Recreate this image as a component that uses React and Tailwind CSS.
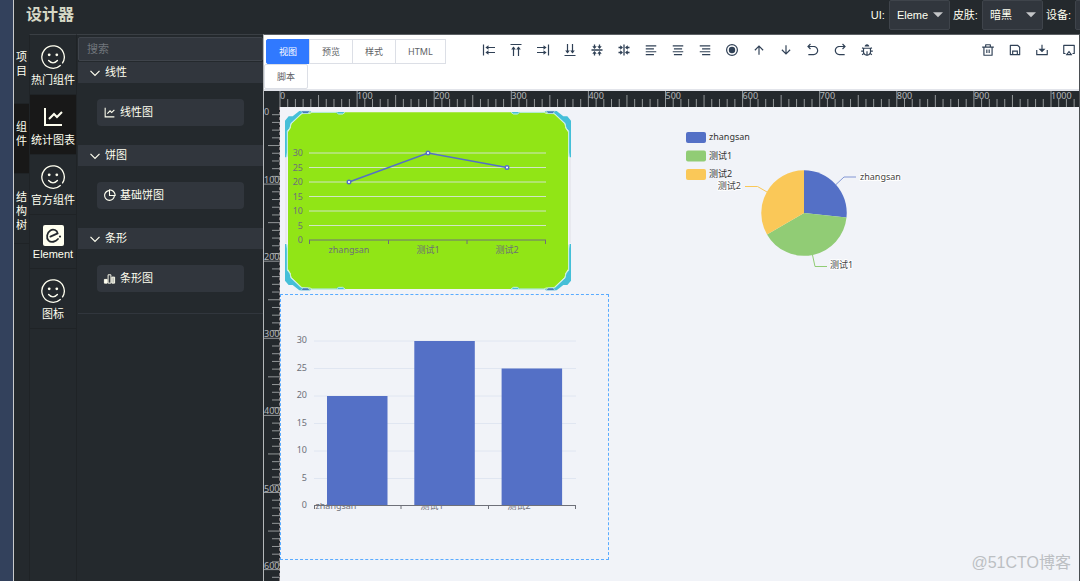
import { useEffect, useRef, useState } from 'react';
import {
  RiLineChartLine, RiPieChart2Line, RiAlignLeft, RiAlignCenter, RiAlignRight,
  RiArrowUpLine, RiArrowDownLine, RiArrowGoBackLine, RiArrowGoForwardLine,
  RiBugLine, RiDeleteBinLine, RiSaveLine, RiDownload2Line, RiAirplayLine, RiArrowDownSFill,
} from 'react-icons/ri';

const RULER_STEP = 7.71;

const Smiley = ({ className }) => (
  <svg viewBox="0 0 24 24" fill="none" stroke="currentColor" className={className}>
    <path d="M20.6 19.3A11.2 11.2 0 1 0 18.8 21" strokeWidth="1.3" transform="rotate(-6 12 12)" />
    <circle cx="8.2" cy="9.8" r="1.4" fill="currentColor" stroke="none" />
    <circle cx="15.8" cy="9.8" r="1.4" fill="currentColor" stroke="none" />
    <path d="M7.6 15.6Q12 20.2 16.4 15.6" strokeWidth="1.4" strokeLinecap="round" />
  </svg>
);

const ElementLogo = ({ className }) => (
  <svg viewBox="0 0 21 21" className={className}>
    <rect width="21" height="21" rx="2" fill="#fffff0" />
    <path d="M7.4 11.6L14.6 8.4C14.2 5.2 10.4 3.6 7.4 5.4C3.8 7.6 3 13 5.6 15.6C8.2 18 12.6 16.8 15 14" fill="none" stroke="#24292d" strokeWidth="1.8" strokeLinecap="round" />
    <circle cx="17" cy="11.6" r="1.1" fill="#24292d" />
  </svg>
);

const Chevron = ({ className }) => (
  <svg viewBox="0 0 12 12" fill="none" stroke="currentColor" className={className}>
    <path d="M1.5 3.8L6 8.3L10.5 3.8" strokeWidth="1.2" />
  </svg>
);

const BarsIcon = ({ className }) => (
  <svg viewBox="0 0 14 14" fill="none" stroke="currentColor" className={className}>
    <path d="M1.5 8H4.5V12H1.5Z" fill="currentColor" />
    <path d="M5.5 3H8.5V12H5.5Z" />
    <path d="M9.5 5.5H12.5V12H9.5Z" fill="currentColor" fillOpacity="0.7" />
  </svg>
);

// Edge alignment: two arrows pushed against a line
const EdgeIcon = ({ rotate }) => (
  <svg viewBox="0 0 14 14" className="w-3.5 h-3.5" fill="none" stroke="currentColor">
    <g transform={`rotate(${rotate} 7 7)`}>
      <path d="M1.5 1.5V12.5M4 4.5H13M4 9.5H13" strokeWidth="1.2" />
      <path d="M6.5 2.2V6.8L3.4 4.5ZM6.5 7.2V11.8L3.4 9.5Z" fill="currentColor" stroke="none" />
    </g>
  </svg>
);

const MiddleIcon = ({ rotate }) => (
  <svg viewBox="0 0 14 14" className="w-3.5 h-3.5" fill="none" stroke="currentColor">
    <g transform={`rotate(${rotate} 7 7)`}>
      <path d="M1.5 7H12.5M4.5 1.5V5M9.5 1.5V5M4.5 9V12.5M9.5 9V12.5" strokeWidth="1.3" />
      <path d="M2.3 3.2H6.7L4.5 6ZM7.3 3.2H11.7L9.5 6ZM2.3 10.8H6.7L4.5 8ZM7.3 10.8H11.7L9.5 8Z" fill="currentColor" stroke="none" />
    </g>
  </svg>
);

const RecordIcon = () => (
  <svg viewBox="0 0 14 14" className="w-3.5 h-3.5" fill="none" stroke="currentColor">
    <circle cx="7" cy="7" r="5.4" strokeWidth="1.2" />
    <circle cx="7" cy="7" r="3.2" fill="currentColor" stroke="none" />
  </svg>
);

const sideTabs = [['项', '目'], ['组', '件'], ['结', '构', '树']];

const categories = [
  { name: '热门组件', icon: <Smiley className="w-6 h-6 mb-[3px]" /> },
  { name: '统计图表', icon: <RiLineChartLine className="w-6 h-6 mb-[3px]" /> },
  { name: '官方组件', icon: <Smiley className="w-6 h-6 mb-[3px]" /> },
  { name: 'Element', icon: <ElementLogo className="w-[21px] h-[21px]" /> },
  { name: '图标', icon: <Smiley className="w-6 h-6 mb-[3px]" /> },
];

const sections = [
  { title: '线性', item: '线性图', Icon: RiLineChartLine },
  { title: '饼图', item: '基础饼图', Icon: RiPieChart2Line },
  { title: '条形', item: '条形图', Icon: BarsIcon },
];

const views = ['视图', '预览', '样式', 'HTML', '脚本'];

const tools = [
  { label: '左对齐', icon: <EdgeIcon rotate={0} /> },
  { label: '上对齐', icon: <EdgeIcon rotate={90} /> },
  { label: '右对齐', icon: <EdgeIcon rotate={180} /> },
  { label: '下对齐', icon: <EdgeIcon rotate={270} /> },
  { label: '垂直居中', icon: <MiddleIcon rotate={0} /> },
  { label: '水平居中', icon: <MiddleIcon rotate={90} /> },
  { label: '文字居左', icon: <RiAlignLeft size={14} /> },
  { label: '文字居中', icon: <RiAlignCenter size={14} /> },
  { label: '文字居右', icon: <RiAlignRight size={14} /> },
  { label: '录制', icon: <RecordIcon /> },
  { label: '上移', icon: <RiArrowUpLine size={14} /> },
  { label: '下移', icon: <RiArrowDownLine size={14} /> },
  { label: '撤销', icon: <RiArrowGoBackLine size={14} /> },
  { label: '重做', icon: <RiArrowGoForwardLine size={14} /> },
  { label: '调试', icon: <RiBugLine size={14} /> },
];

const fileTools = [
  { label: '删除', icon: <RiDeleteBinLine size={14} /> },
  { label: '保存', icon: <RiSaveLine size={14} /> },
  { label: '下载', icon: <RiDownload2Line size={14} /> },
  { label: '投屏', icon: <RiAirplayLine size={14} /> },
];

const data = [
  { name: 'zhangsan', value: 20, color: '#5470c6' },
  { name: '测试1', value: 30, color: '#91cc75' },
  { name: '测试2', value: 25, color: '#fac858' },
];
const levels = [0, 5, 10, 15, 20, 25, 30];

const HeaderSelect = ({ id, label, options }) => (
  <div className="flex items-center shrink-0">
    <label htmlFor={id} className="mr-1">{label}</label>
    <div className="relative">
      <select id={id} className="appearance-none block w-[61px] h-[30px] pl-[7px] pr-[21px] bg-[#31363d] border border-[#3f444b] rounded-xs text-[#fffff0]">
        {options.map((o) => <option key={o}>{o}</option>)}
      </select>
      <RiArrowDownSFill className="absolute right-0.5 top-1 w-5 h-5 text-[#c4c6c8] pointer-events-none" />
    </div>
  </div>
);

const tickSize = (i) => (i % 10 === 0 ? 16 : i % 5 === 0 ? 12 : 8);

// Tick indexes that fit in the measured element
const useTicks = (side) => {
  const ref = useRef(null);
  const [length, setLength] = useState(0);

  useEffect(() => {
    const measure = () => setLength(ref.current.getBoundingClientRect()[side]);
    measure();
    const observer = new ResizeObserver(measure);
    observer.observe(ref.current);
    return () => observer.disconnect();
  }, [side]);

  return [ref, Array.from({ length: Math.ceil(length / RULER_STEP) }, (_, i) => i)];
};

const HorizontalRuler = () => {
  const [ref, ticks] = useTicks('width');
  return (
    <div ref={ref} className="flex-1 min-w-0 h-4">
      <svg className="block w-full h-4 overflow-visible" fill="#b4b7b9" fontSize="9">
        {ticks.map((i) => (
          <g key={i}>
            <line x1={i * RULER_STEP} x2={i * RULER_STEP} y1={16 - tickSize(i)} y2="16" stroke="#94989a" />
            {i % 10 === 0 && <text x={i * RULER_STEP} y="8">{i * 10}</text>}
          </g>
        ))}
      </svg>
    </div>
  );
};

const VerticalRuler = () => {
  const [ref, ticks] = useTicks('height');
  return (
    <div ref={ref} className="relative w-4 shrink-0 border-r border-dashed border-[#8a8285]">
      <svg className="absolute inset-0 w-full h-full overflow-visible" fill="#b4b7b9" fontSize="9">
        {ticks.map((i) => (
          <g key={i}>
            {i > 0 && <line y1={i * RULER_STEP} y2={i * RULER_STEP} x1={16 - tickSize(i)} x2="16" stroke="#94989a" />}
            {i % 10 === 0 && <text x="0" y={i === 0 ? 8 : i * RULER_STEP - 1}>{i * 10}</text>}
          </g>
        ))}
      </svg>
    </div>
  );
};

const FrameCorner = ({ transform }) => (
  <g transform={transform}>
    <path d="M75 172V62L86 49H98L118 33H150L158 38H228L234 43H248L256 36H150L122 42L92 70L89 84L82 92V150L79 172Z" fill="#45bfd8" />
    <path d="M82 170V94L90 84L93 72L124 41L150 40L156 37H230L236 42H248L255 37" fill="none" stroke="#c6f2d8" strokeWidth="3" />
    <path d="M122 33H150L144 40H130Z" fill="#3a6fb0" stroke="#b8e4f0" strokeWidth="2" />
  </g>
);

const LineChart = () => {
  const y = (v) => 131 - v * 2.9;
  const points = data.map((d, i) => [65 + i * 79, y(d.value)]);
  return (
    <>
      <svg viewBox="72 27 867 546" className="absolute inset-0 w-full h-full">
        <path d="M84 96L92 84L94 72L126 42L150 37H856L882 42L914 72L916 84L924 96V508L916 520L914 532L882 562L856 567H150L126 562L94 532L92 520L84 508Z" fill="#91e516" />
        <path d="M78 172V430M930 172V430" stroke="#e6e8ee" strokeWidth="5" />
        <FrameCorner />
        <FrameCorner transform="translate(1008 0) scale(-1 1)" />
        <FrameCorner transform="translate(0 604) scale(1 -1)" />
        <FrameCorner transform="translate(1008 604) scale(-1 -1)" />
      </svg>
      <svg className="absolute inset-0 w-full h-full" fontSize="9" fill="#6e7079">
        {levels.map((v) => (
          <g key={v}>
            <line x1="25" x2="262" y1={y(v)} y2={y(v)} stroke={v ? '#e0e6f1' : '#6e7079'} strokeOpacity={v ? 0.8 : 1} />
            <text x="19" y={y(v) + 3} textAnchor="end">{v}</text>
          </g>
        ))}
        {[25.5, 104.5, 183, 261.5].map((x) => <line key={x} x1={x} x2={x} y1="131" y2="135" stroke="#6e7079" />)}
        <polyline points={points.join(' ')} fill="none" stroke="#5470c6" strokeWidth="1.5" />
        {points.map(([px, py], i) => (
          <g key={data[i].name}>
            <circle cx={px} cy={py} r="1.8" fill="#fff" stroke="#5470c6" strokeWidth="1.4" />
            <text x={px} y="144" textAnchor="middle">{data[i].name}</text>
          </g>
        ))}
      </svg>
    </>
  );
};

const BarChart = () => {
  const y = (v) => 211 - v * 5.5;
  const labelX = [55, 151, 238];
  return (
    <svg className="w-full h-full" fontSize="9" fill="#6e7079">
      <clipPath id="below-axis"><rect x="0" y="208" width="329" height="14" /></clipPath>
      {levels.map((v) => (
        <g key={v}>
          {v > 0 && <line x1="33" x2="295" y1={y(v)} y2={y(v)} stroke="#e0e6f1" />}
          <text x="26" y={y(v) + 2} textAnchor="end">{v}</text>
        </g>
      ))}
      <g clipPath="url(#below-axis)">
        {data.map((d, i) => <text key={d.name} x={labelX[i]} y="214" textAnchor="middle">{d.name}</text>)}
      </g>
      {data.map((d, i) => <rect key={d.name} x={46 + i * 87.3} y={y(d.value)} width="60.5" height={d.value * 5.5} fill="#5470c6" />)}
      <path d="M33 210.5H295M33.5 211V214M120 211V214M207.5 211V214M294.5 211V214" stroke="#6e7079" fill="none" />
    </svg>
  );
};

const PieChart = () => (
  <svg className="w-full h-full" fontSize="9" fill="#444">
    {data.map((d, i) => (
      <g key={d.name}>
        <rect x="6" y={12 + i * 18.5} width="20" height="11" rx="2" fill={d.color} />
        <text x="29" y={20 + i * 18.5} fill="#333">{d.name}</text>
      </g>
    ))}
    <path d="M124 93V50.3A42.7 42.7 0 0 1 166.5 97.5Z" fill="#5470c6" />
    <path d="M124 93L166.5 97.5A42.7 42.7 0 0 1 87 114.4Z" fill="#91cc75" />
    <path d="M124 93L87 114.4A42.7 42.7 0 0 1 124 50.3Z" fill="#fac858" />
    <g fill="none">
      <path d="M156 64.5L164 57H176" stroke="#5470c6" strokeOpacity="0.7" />
      <path d="M132.5 135L135 146.5H147" stroke="#91cc75" />
      <path d="M87 72L77.5 66.5H65" stroke="#fac858" />
    </g>
    <g stroke="#fff" strokeWidth="2" paintOrder="stroke" strokeLinejoin="round">
      <text x="180" y="60">zhangsan</text>
      <text x="150" y="148">测试1</text>
      <text x="61" y="69" textAnchor="end">测试2</text>
    </g>
  </svg>
);

const App = () => {
  const [tab, setTab] = useState(1);
  const [category, setCategory] = useState(1);
  const [view, setView] = useState('视图');

  return (
    <div className="flex min-h-screen overflow-hidden bg-[#24292d] text-[11px] text-[#fffff0] font-['Liberation_Sans','Noto_Sans_CJK_SC',sans-serif]">
      <div className="w-[13px] shrink-0 bg-[#33415c]" />

      <div className="flex-1 min-w-0 flex flex-col border-l border-[#c8cacc]">
        <header className="flex items-center justify-between h-[34px] pl-3 pb-1 overflow-hidden">
          <h1 className="text-base leading-6 font-bold text-[#d6d8c6]">设计器</h1>
          <div className="flex items-center gap-[3px] -mr-14">
            <HeaderSelect id="ui" label="UI:" options={['Element', 'Antd']} />
            <HeaderSelect id="skin" label="皮肤:" options={['暗黑', '明亮']} />
            <HeaderSelect id="device" label="设备:" options={['电脑', '手机']} />
          </div>
        </header>

        <div className="flex-1 flex min-w-0">
          {/* Side tabs */}
          <nav className="w-[15px] shrink-0">
            {sideTabs.map((chars, i) => (
              <button key={i} onClick={() => setTab(i)} className={`flex flex-col items-center w-full h-[70px] pt-4 leading-[14px] border-b border-[#1f2326] ${tab === i ? 'bg-[#181818]' : ''}`}>
                {chars.map((c) => <span key={c}>{c}</span>)}
              </button>
            ))}
          </nav>

          {/* Component categories */}
          <nav className="w-12 shrink-0 border-x border-t border-x-[#1f2326] border-t-[#3a3f44]">
            {categories.map((c, i) => (
              <button key={c.name} onClick={() => setCategory(i)} className={`flex flex-col items-center w-full pt-2.5 pb-[5px] border-b border-[#1f2326] leading-[17px] whitespace-nowrap ${category === i ? 'bg-[#181818]' : ''}`}>
                {c.icon}
                <span>{c.name}</span>
              </button>
            ))}
          </nav>

          {/* Component list */}
          <aside className="w-[186px] shrink-0 border-t border-[#3a3f44] pt-0.5 pl-px">
            <input type="text" aria-label="搜索" placeholder="搜索" className="block w-full h-6 mb-px px-2 bg-[#31363d] border border-[#3f444b] rounded-xs placeholder:text-[#70757b]" />
            <div className="pb-0.5 border-b border-[#31363d]">
              {sections.map(({ title, item, Icon }) => (
                <section key={title}>
                  <button className="flex items-center gap-1 w-full h-[21px] pl-[11px] bg-[#31363d]">
                    <Chevron className="w-3 h-3" />
                    {title}
                  </button>
                  <div className="pt-4 pb-[19px] px-[19px]">
                    <button className="flex items-center gap-1 w-full h-[27px] px-1.5 bg-[#31363d] rounded-sm">
                      <Icon className="w-[13px] h-[13px]" />
                      {item}
                    </button>
                  </div>
                </section>
              ))}
            </div>
          </aside>

          {/* Editor */}
          <main className="flex-1 min-w-0 flex flex-col border-t border-l border-r border-t-[#5c6064] border-l-[#b4b7b9] border-r-[#4a4e52] font-['Noto_Sans','Noto_Sans_CJK_SC',sans-serif]">
            <div className="flex items-start bg-white border-b-2 border-[#e2e4ea] text-[#304156]">
              <div className="flex flex-wrap w-[184px] shrink-0 pt-1 text-[9px] text-[#606266]">
                {views.map((v) => (
                  <button key={v} onClick={() => setView(v)} className={`h-[25px] min-w-[43px] px-3 border first:ml-0.5 -mr-px last:rounded-xs ${view === v ? 'bg-[#3079ff] border-[#3079ff] text-white rounded-l-xs' : 'bg-white border-[#dcdfe6]'}`}>
                    {v}
                  </button>
                ))}
              </div>
              <div className="flex gap-[13px] pt-2 pl-[34px]">
                {tools.map((t) => <button key={t.label} aria-label={t.label}>{t.icon}</button>)}
              </div>
              <div className="flex gap-[13px] pt-2 pr-[3px] ml-auto">
                {fileTools.map((t) => <button key={t.label} aria-label={t.label}>{t.icon}</button>)}
              </div>
            </div>

            <div className="flex pl-4">
              <HorizontalRuler />
            </div>
            <div className="flex-1 flex">
              <VerticalRuler />
              <div className="flex-1 relative min-h-[474px] overflow-hidden bg-[#f1f3f8]">
                <div className="absolute left-1 top-0.5 w-[289px] h-[182px]">
                  <LineChart />
                </div>
                <div className="absolute left-[400px] top-[13px] w-[240px] h-[170px]">
                  <PieChart />
                </div>
                <div className="absolute left-0 top-[187px] w-[329px] h-[266px] border border-dashed border-[#5aabff]">
                  <BarChart />
                </div>
                <span className="absolute right-2 bottom-1.5 text-base leading-6 text-[#bcbfc3] font-['Liberation_Sans','Noto_Sans_CJK_SC',sans-serif]">@51CTO博客</span>
              </div>
            </div>
          </main>
        </div>
      </div>
    </div>
  );
};

export default App;
